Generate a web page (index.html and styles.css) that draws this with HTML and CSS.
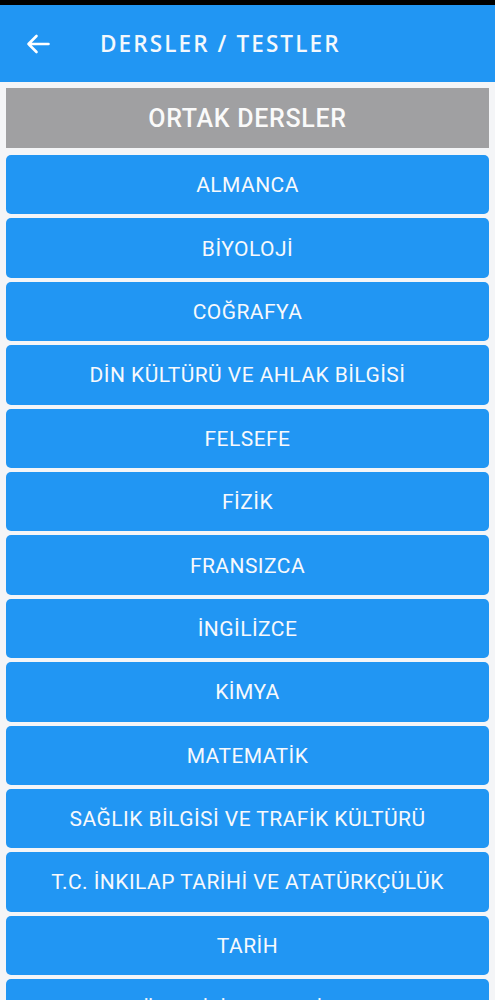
FILE: index.html
```html
<!DOCTYPE html>
<html lang="tr">
<head>
<meta charset="utf-8">
<title>Dersler / Testler</title>
<link rel="stylesheet" href="styles.css">
</head>
<body>
<div class="statusbar"></div>
<header class="appbar">
  <svg class="back" viewBox="0 0 24 20" width="24" height="20" aria-hidden="true">
    <path d="M22.5 10H2.5M10.5 2L2.5 10L10.5 18" fill="none" stroke="#fff" stroke-width="2.6" stroke-linecap="round" stroke-linejoin="round"/>
  </svg>
  <h1 class="title">DERSLER / TESTLER</h1>
</header>
<main class="content">
  <div class="section">ORTAK DERSLER</div>
  <ul class="list">
    <li class="item">ALMANCA</li>
    <li class="item">BİYOLOJİ</li>
    <li class="item">COĞRAFYA</li>
    <li class="item">DİN KÜLTÜRÜ VE AHLAK BİLGİSİ</li>
    <li class="item">FELSEFE</li>
    <li class="item">FİZİK</li>
    <li class="item">FRANSIZCA</li>
    <li class="item">İNGİLİZCE</li>
    <li class="item">KİMYA</li>
    <li class="item">MATEMATİK</li>
    <li class="item">SAĞLIK BİLGİSİ VE TRAFİK KÜLTÜRÜ</li>
    <li class="item">T.C. İNKILAP TARİHİ VE ATATÜRKÇÜLÜK</li>
    <li class="item">TARİH</li>
    <li class="item">TÜRK DİLİ VE EDEBİYATI</li>
  </ul>
</main>
</body>
</html>
```

FILE: styles.css
```css
html, body {
  margin: 0;
  padding: 0;
}
body {
  background: #f4f5f7;
  font-family: Roboto, "Liberation Sans", sans-serif;
  height: 1000px;
  overflow: hidden;
}
.statusbar {
  height: 5px;
  background: #000;
}
.appbar {
  height: 77px;
  background: #2196f3;
  display: flex;
  align-items: center;
  padding-left: 26px;
  box-sizing: border-box;
}
.back {
  display: block;
  flex: none;
}
.title {
  margin: 0 0 0 50px;
  color: #f4f8fc;
  font-family: "Open Sans", sans-serif;
  font-weight: 600;
  font-size: 22.5px;
  letter-spacing: 2.1px;
}
.content {
  padding: 6px 6px 0 6px;
}
.section {
  height: 60px;
  background: #a0a0a2;
  color: #fafafa;
  font-size: 25px;
  font-weight: 500;
  letter-spacing: 0.7px;
  display: flex;
  align-items: center;
  justify-content: center;
}
.list {
  list-style: none;
  margin: 7px 0 0 0;
  padding: 0;
  display: flex;
  flex-direction: column;
  gap: 4px;
}
.item {
  height: 59.4px;
  padding-top: 1px;
  box-sizing: border-box;
  background: #2196f3;
  border-radius: 5px;
  color: #f7f9fc;
  font-size: 21px;
  letter-spacing: 0.45px;
  display: flex;
  align-items: center;
  justify-content: center;
  flex: none;
}
```
